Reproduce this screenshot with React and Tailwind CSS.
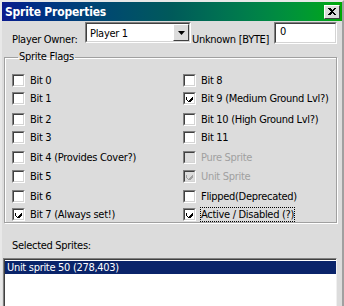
import React from "react";

const FONT = { fontFamily: '"DejaVu Sans Condensed", Tahoma, "DejaVu Sans", sans-serif' };

const leftFlags = [
  { label: "Bit 0" },
  { label: "Bit 1" },
  { label: "Bit 2" },
  { label: "Bit 3" },
  { label: "Bit 4 (Provides Cover?)" },
  { label: "Bit 5" },
  { label: "Bit 6" },
  { label: "Bit 7 (Always set!)", checked: true },
];

const rightFlags = [
  { label: "Bit 8" },
  { label: "Bit 9 (Medium Ground Lvl?)", checked: true },
  { label: "Bit 10 (High Ground Lvl?)" },
  { label: "Bit 11" },
  { label: "Pure Sprite", disabled: true },
  { label: "Unit Sprite", disabled: true, checked: true },
  { label: "Flipped(Deprecated)" },
  { label: "Active / Disabled (?)", checked: true, focused: true },
];

// gap above each row, in px
const rowGaps = ["mt-0", "mt-[5px]", "mt-[8px]", "mt-[5px]", "mt-[7px]", "mt-[6px]", "mt-[7px]", "mt-[5px]"];

function Check({ checked, disabled }) {
  return (
    <div className="w-[13px] h-[13px] shrink-0 border-t border-l border-[#808080] border-b border-r border-b-white border-r-white">
      <div
        className={`w-full h-full border-t border-l border-[#404040] border-b border-r border-b-[#d4d4d4] border-r-[#d4d4d4] flex items-center justify-center ${
          disabled ? "bg-[#dcdcdc]" : "bg-white"
        }`}
      >
        {checked && (
          <svg width="7" height="7" viewBox="0 0 7 7" shapeRendering="crispEdges">
            <path
              d="M0 2h1v3h1v1h1v-1h1v-1h1v-1h1v-1h1v3h-1v1h-1v1h-1v1h-1v-1h-1v-1h-1v-1h-1z"
              fill={disabled ? "#a0a0a0" : "#000"}
            />
          </svg>
        )}
      </div>
    </div>
  );
}

function FlagRow({ flag, gap }) {
  return (
    <div className={`flex items-center h-[13px] ${gap}`}>
      <Check checked={flag.checked} disabled={flag.disabled} />
      <span
        className={`ml-[5px] whitespace-nowrap leading-[13px] ${
          flag.disabled ? "text-[#a0a0a0]" : "text-black"
        } ${flag.focused ? "outline outline-1 outline-dotted outline-black outline-offset-0" : ""}`}
      >
        {flag.label}
      </span>
    </div>
  );
}

export default function App() {
  return (
    <div
      className="w-[344px] h-[306px] overflow-hidden bg-[#dcdcdc] text-[11px] tracking-[-0.3px] text-black border-t-2 border-l-2 border-[#e8e8e8] border-r-2 border-r-[#a0a0a0]"
      style={FONT}
    >
      {/* Title bar */}
      <div className="h-[19px] flex items-center justify-between pl-[3px] pr-[2px] bg-gradient-to-r from-[#0b1a8e] via-[#005a5a] to-[#00aa00]">
        <span className="text-white font-bold text-[12px] tracking-[-0.2px]">Sprite Properties</span>
        <div className="w-[16px] h-[14px] bg-[#dcdcdc] border-t border-l border-white border-b border-r border-b-[#404040] border-r-[#404040] flex items-center justify-center">
          <svg width="8" height="7" viewBox="0 0 8 7" shapeRendering="crispEdges">
            <path d="M0 0h2l2 2 2-2h2v1L5 3.5 8 6v1H6L4 5 2 7H0V6l3-2.5L0 1z" fill="#000" />
          </svg>
        </div>
      </div>

      {/* Owner row */}
      <div className="flex items-start h-[23px] mt-[1px]">
        <span className="ml-[10px] mt-[10px] w-[73px] whitespace-nowrap">Player Owner:</span>
        <div className="w-[106px] h-[21px] border-t border-l border-[#808080] border-b border-r border-b-white border-r-white">
          <div className="w-full h-full bg-white border-t border-l border-[#404040] border-b border-r border-b-[#d4d4d4] border-r-[#d4d4d4] flex items-start justify-between">
            <span className="ml-[3px] mt-[2px]">Player 1</span>
            <div className="w-[16px] h-[17px] bg-[#dcdcdc] border-t border-l border-white border-b border-r border-b-[#404040] border-r-[#404040] flex items-center justify-center">
              <svg width="7" height="4" viewBox="0 0 7 4">
                <path d="M0 0h7L3.5 4z" fill="#000" />
              </svg>
            </div>
          </div>
        </div>
        <span className="ml-[1px] mt-[10px] w-[82px] whitespace-nowrap">Unknown [BYTE]</span>
        <div className="w-[63px] h-[22px] border-t border-l border-[#808080] border-b border-r border-b-white border-r-white">
          <div className="w-full h-full bg-white border-t border-l border-[#404040] border-b border-r border-b-[#d4d4d4] border-r-[#d4d4d4]">
            <span className="ml-[4px] leading-[15px]">0</span>
          </div>
        </div>
      </div>

      {/* Sprite Flags group */}
      <fieldset className="mx-[2px] mt-[6px] w-[332px] h-[172px] border border-[#a0a0a0] shadow-[inset_1px_1px_0_#fff,1px_1px_0_#fff] px-[7px] pt-[11px]">
        <legend className="ml-[6px] px-[1px] leading-[12px]">Sprite Flags</legend>
        <div className="flex">
          <div className="w-[171px] flex flex-col">
            {leftFlags.map((f, i) => (
              <FlagRow key={f.label} flag={f} gap={rowGaps[i]} />
            ))}
          </div>
          <div className="flex flex-col">
            {rightFlags.map((f, i) => (
              <FlagRow key={f.label} flag={f} gap={rowGaps[i]} />
            ))}
          </div>
        </div>
      </fieldset>

      <div className="ml-[10px] mt-[15px]">Selected Sprites:</div>

      {/* List box */}
      <div className="ml-[1px] mt-[3px] w-[334px] h-[60px] border-t border-l border-[#808080] border-b border-r border-b-white border-r-[#f0f0f0]">
        <div className="w-full h-full bg-white border-t border-l border-[#404040] pt-[1px]">
          <div className="h-[13px] bg-[#0a246a] text-white pl-[2px] leading-[13px]">
            Unit sprite 50 (278,403)
          </div>
        </div>
      </div>
    </div>
  );
}
